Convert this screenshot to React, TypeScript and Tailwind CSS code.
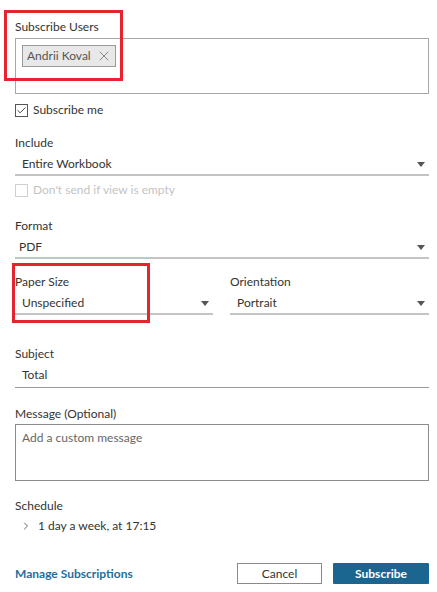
import { X, Check, ChevronRight } from 'lucide-react';

const Caret = () => (
  <svg width="8" height="5" viewBox="0 0 8 5" className="shrink-0">
    <path d="M0 0 L8 0 L4 5 Z" fill="#555555" />
  </svg>
);

const Select = ({ value, indent = 'pl-[7px]' }: { value: string; indent?: string }) => {
  return (
    <div className={`mt-[2px] flex items-center justify-between border-b-2 border-[#c4c4c4] pt-[3px] pb-[2px] pr-[4px] ${indent}`}>
      <span className="leading-4 text-[#333333]">{value}</span>
      <Caret />
    </div>
  );
};

const Label = ({ children, className = '' }: { children: React.ReactNode; className?: string }) => (
  <div className={`leading-4 text-[#333333] ${className}`}>{children}</div>
);

export default function App() {
  return (
    <div
      className="relative w-[437px] h-[592px] bg-white text-[12px] pl-[15px] pr-[8px] pt-[19px]"
      style={{ fontFamily: 'Lato, "Noto Sans", sans-serif' }}
    >
      <Label>Subscribe Users</Label>
      <div className="mt-[3px] h-[56px] border border-[#a8a8a8] pl-[6px] pt-[6px]">
        <div className="inline-flex items-center h-[22px] bg-[#e8e8e8] border border-[#9a9a9a] pl-[4px] pr-[3px] gap-[5px]">
          <span className="leading-4 text-[#555555]">Andrii Koval</span>
          <X size={16} strokeWidth={1.1} color="#666666" />
        </div>
      </div>

      <div className="mt-[8px] flex items-center h-4 gap-[5px]">
        <div className="w-[13px] h-[13px] border border-[#555555] flex items-center justify-center">
          <Check size={11} strokeWidth={2} color="#333333" />
        </div>
        <span className="leading-4 text-[#333333]">Subscribe me</span>
      </div>

      <Label className="mt-[17px]">Include</Label>
      <Select value="Entire Workbook" />

      <div className="mt-[6px] flex items-center h-4 gap-[5px]">
        <div className="w-[13px] h-[13px] border border-[#d0d0d0]" />
        <span className="leading-4 text-[#c4c4c4]">Don&apos;t send if view is empty</span>
      </div>

      <Label className="mt-[20px]">Format</Label>
      <Select value="PDF" indent="pl-[4px]" />

      <div className="mt-[15px] flex gap-[17px]">
        <div className="w-[198px]">
          <Label>Paper Size</Label>
          <Select value="Unspecified" />
        </div>
        <div className="flex-1">
          <Label>Orientation</Label>
          <Select value="Portrait" />
        </div>
      </div>

      <Label className="mt-[31px]">Subject</Label>
      <div className="mt-[1px] border-b border-[#9a9a9a] pl-[7px] pt-[3px] pb-[3px]">
        <span className="leading-4 text-[#333333]">Total</span>
      </div>

      <Label className="mt-[18px]">Message (Optional)</Label>
      <div className="mt-[2px] h-[57px] border border-[#8c8c8c] pl-[6px] pt-[4px]">
        <span className="leading-4 text-[#666666]">Add a custom message</span>
      </div>

      <Label className="mt-[17px]">Schedule</Label>
      <div className="mt-[4px] flex items-center h-4 pl-[5px] gap-[6px]">
        <ChevronRight size={12} strokeWidth={1.5} color="#333333" />
        <span className="leading-4 text-[#333333]">1 day a week, at 17:15</span>
      </div>

      <div className="mt-[29px] flex items-center">
        <span className="font-bold text-[#1f6e9b] leading-4">Manage Subscriptions</span>
        <div className="ml-auto flex gap-[11px]">
          <button className="w-[85px] h-[21px] border border-[#8a8a8a] bg-white text-[#333333] leading-4">
            Cancel
          </button>
          <button className="w-[96px] h-[21px] bg-[#1b6690] text-white font-bold leading-4 rounded-[1px]">
            Subscribe
          </button>
        </div>
      </div>

      <div className="absolute left-[4px] top-[10px] w-[119px] h-[71px] border-[3px] border-[#e5252b]" />
      <div className="absolute left-[12px] top-[263px] w-[138px] h-[60px] border-[3px] border-[#e5252b]" />
    </div>
  );
}
